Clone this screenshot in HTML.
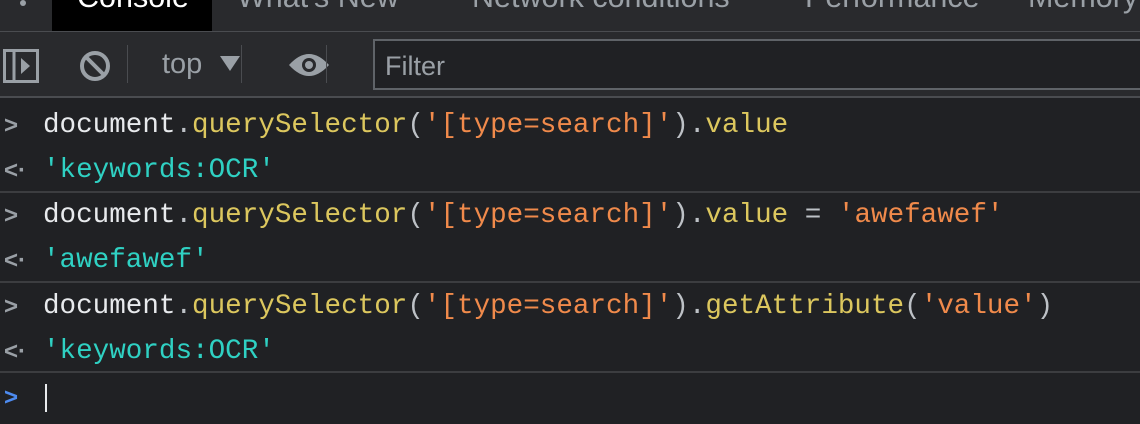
<!DOCTYPE html><html><head><style>
body{margin:0;width:1140px;height:424px;overflow:hidden;background:#202124;font-family:"Liberation Sans",sans-serif;position:relative}
.tabs{position:absolute;left:0;top:0;width:1140px;height:31px;background:#292a2d;border-bottom:1px solid #4a4c50;overflow:hidden}
.tab{position:absolute;top:-20px;font-size:30.5px;color:#9aa0a6;white-space:nowrap}
.tb{position:absolute;left:0;top:32px;width:1140px;height:64px;background:#292a2d;border-bottom:2px solid #4a4c50}
.sep{position:absolute;top:13px;width:1px;height:38px;background:#4a4c50}
.filter{position:absolute;left:373px;top:7px;width:780px;height:51px;background:#202124;border:2px solid #5f6368;box-sizing:border-box;color:#9aa0a6;font-size:27px;padding:10px 0 0 10px}
.row{position:absolute;left:0;width:1140px;height:45px;font-family:"Liberation Mono",monospace;font-size:27.6px;line-height:45px;white-space:pre;color:#e8eaed}
.row span.c{position:absolute;left:43px;top:0}
.hr{position:absolute;left:0;width:1140px;height:2px;background:#3c3d40}
.y{color:#dcc75e}.o{color:#f08a4b}.t{color:#2fd1c3}.p{color:#bdc1c6}
.pr{position:absolute;left:4px;top:0;color:#9aa0a6;font-family:"Liberation Sans",sans-serif;font-size:24px;font-weight:bold}
</style></head><body>
<div class="tabs">
<div style="position:absolute;left:20px;top:0;width:6px;height:6px;border-radius:3px;background:#9aa0a6"></div>
<div style="position:absolute;left:52px;top:0;width:160px;height:31px;background:#000"></div>
<div class="tab" style="left:77px;color:#fff">Console</div>
<div class="tab" style="left:237px">What's New</div>
<div class="tab" style="left:472px">Network conditions</div>
<div class="tab" style="left:805px">Performance</div>
<div class="tab" style="left:1028px">Memory</div>
</div>
<div class="tb">
<svg style="position:absolute;left:3px;top:17px" width="36" height="34" viewBox="0 0 36 34"><rect x="1.5" y="1.5" width="33" height="31" fill="none" stroke="#9aa0a6" stroke-width="3"/><line x1="11" y1="2" x2="11" y2="32" stroke="#9aa0a6" stroke-width="3"/><path d="M18 9 L27 17 L18 25Z" fill="#9aa0a6"/></svg>
<svg style="position:absolute;left:79px;top:18px" width="32" height="32" viewBox="0 0 32 32"><circle cx="16" cy="16" r="13" fill="none" stroke="#9aa0a6" stroke-width="4"/><line x1="7" y1="7" x2="25" y2="25" stroke="#9aa0a6" stroke-width="4"/></svg>
<div class="sep" style="left:127px"></div>
<div style="position:absolute;left:162px;top:16px;font-size:29px;color:#9aa0a6">top</div>
<svg style="position:absolute;left:220px;top:24px" width="20" height="16"><path d="M0 0H20L10 15Z" fill="#9aa0a6"/></svg>
<div class="sep" style="left:241px"></div>
<svg style="position:absolute;left:288px;top:18px" width="42" height="30" viewBox="0 0 42 30"><path d="M1 15 Q21 -7 41 15 Q21 37 1 15Z" fill="#9aa0a6"/><circle cx="21" cy="15" r="7" fill="#292a2d"/><circle cx="21" cy="15" r="4" fill="#9aa0a6"/></svg>
<div class="sep" style="left:326px"></div>
<div class="filter">Filter</div>
</div>
<div class="row" style="top:103px"><span class="pr">&gt;</span><span class="c">document<span class="p">.</span><span class="y">querySelector</span><span class="p">(</span><span class="o">'[type=search]'</span><span class="p">).</span><span class="y">value</span></span></div>
<div class="row" style="top:148px"><span class="pr">&lt;·</span><span class="c t">'keywords:OCR'</span></div>
<div class="hr" style="top:191px"></div>
<div class="row" style="top:193px"><span class="pr">&gt;</span><span class="c">document<span class="p">.</span><span class="y">querySelector</span><span class="p">(</span><span class="o">'[type=search]'</span><span class="p">).</span><span class="y">value</span> <span class="p">=</span> <span class="o">'awefawef'</span></span></div>
<div class="row" style="top:238px"><span class="pr">&lt;·</span><span class="c t">'awefawef'</span></div>
<div class="hr" style="top:281px"></div>
<div class="row" style="top:284px"><span class="pr">&gt;</span><span class="c">document<span class="p">.</span><span class="y">querySelector</span><span class="p">(</span><span class="o">'[type=search]'</span><span class="p">).</span><span class="y">getAttribute</span><span class="p">(</span><span class="o">'value'</span><span class="p">)</span></span></div>
<div class="row" style="top:329px"><span class="pr">&lt;·</span><span class="c t">'keywords:OCR'</span></div>
<div class="hr" style="top:371px"></div>
<div class="row" style="top:375px"><span class="pr" style="color:#4d8bf0">&gt;</span><span style="position:absolute;left:45px;top:9px;width:2px;height:28px;background:#e8eaed"></span></div>
</body></html>
